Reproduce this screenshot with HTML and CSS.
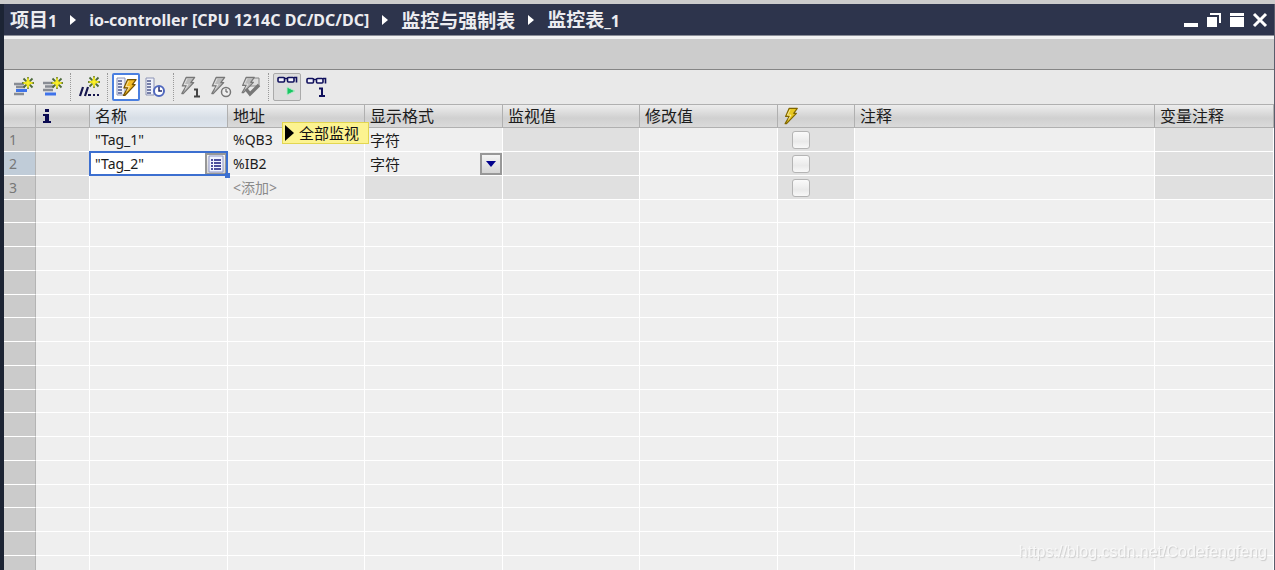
FILE: index.html
```html
<!DOCTYPE html>
<html lang="zh-CN">
<head>
    <meta charset="UTF-8">
    <meta name="viewport" content="width=device-width, initial-scale=1.0">
    <title>监控表_1</title>
    <link rel="stylesheet" href="styles.css">
</head>
<body>
    <!-- shared icon shapes -->
    <svg class="symbols" aria-hidden="true">
        <symbol id="star" viewBox="0 0 12 12">
            <path d="M6 0V12M0 6H12M1.5 1.5L10.5 10.5M10.5 1.5L1.5 10.5" stroke="#4d6a3c" stroke-width="1.8"/>
            <path d="M6 2L7 5L10 6L7 7L6 10L5 7L2 6L5 5Z" fill="#fff23c" stroke="#f4ea20" stroke-width="1.5"/>
        </symbol>
        <symbol id="bolt" viewBox="0 0 16 20">
            <path d="M6 1.5H15L11 7H14L3 18.5H1.5L6 10.5H2Z" stroke-width="1.3" stroke-linejoin="round"/>
            <path d="M7 3L4 9H8L5 14" fill="none" stroke="#fff" stroke-opacity=".6"/>
        </symbol>
        <symbol id="ruler" viewBox="0 0 10 19">
            <path d="M1 1H9V18H1Z" fill="#eef0fa" stroke="#8d94b4"/>
            <path d="M2 4H6M2 7H6M2 10H6M2 13H6M2 16H6" stroke="#4d588c" stroke-width="1.3"/>
        </symbol>
        <symbol id="glasses" viewBox="0 0 22 8">
            <rect x="1" y="1.500" width="6.500" height="4.500" rx="1" fill="#f4f4fc" stroke="#10105c" stroke-width="1.600"/>
            <rect x="10.500" y="1.500" width="6.500" height="4.500" rx="1" fill="#f4f4fc" stroke="#10105c" stroke-width="1.600"/>
            <path d="M7 2.500H11M17 1.500H19.500V6.500" fill="none" stroke="#10105c" stroke-width="1.600"/>
        </symbol>
    </svg>

    <div class="app-strip"></div>
    <div class="window">
        <header class="title-bar">
            <nav class="breadcrumb">
                <a href="#"><span class="cjk">项目</span>1</a>
                <i class="arrow"></i>
                <a href="#">io-controller [CPU 1214C DC/DC/DC]</a>
                <i class="arrow"></i>
                <a href="#" class="cjk">监控与强制表</a>
                <i class="arrow"></i>
                <a href="#"><span class="cjk">监控表</span>_1</a>
            </nav>
            <div class="window-buttons">
                <button aria-label="最小化"><svg width="16" height="16"><path d="M1 11H15V15H1Z" fill="#fff"/></svg></button>
                <button aria-label="还原"><svg width="16" height="16"><path d="M1 5H11V15H1Z" fill="#fff"/><path d="M4 2H14V11" fill="none" stroke="#fff" stroke-width="2"/></svg></button>
                <button aria-label="最大化"><svg width="16" height="16"><path d="M1 1H15V4H1ZM1 5H15V15H1Z" fill="#fff"/></svg></button>
                <button aria-label="关闭"><svg width="16" height="16"><path d="M2 2L14 14M14 2L2 14" stroke="#fff" stroke-width="3"/></svg></button>
            </div>
        </header>
        <div class="info-bar"></div>

        <div class="toolbar">
            <div class="tool-group">
                <button aria-label="插入行">
                    <svg width="24" height="24"><path d="M3 9H13M5 12H14M3 19H13" stroke="#888c94" stroke-width="2.4"/><path d="M5 15.500H16" stroke="#3e73ea" stroke-width="3"/><use href="#star" x="11" y="2" width="12" height="12"/></svg>
                </button>
                <button aria-label="添加行">
                    <svg width="24" height="24"><path d="M3 8H13M5 11.500H14M3 15H13" stroke="#888c94" stroke-width="2.400"/><path d="M5 19H16" stroke="#3e73ea" stroke-width="3"/><use href="#star" x="11" y="2" width="12" height="12"/></svg>
                </button>
            </div>
            <div class="tool-group">
                <button aria-label="插入注释行">
                    <svg width="24" height="24"><path d="M6 12L3 21M11 12L8 21M11 20H14M16 20H18M20 20H22" stroke="#15154d" stroke-width="2.2"/><use href="#star" x="11" y="1" width="12" height="12"/></svg>
                </button>
            </div>
            <div class="tool-group">
                <button class="active" aria-label="显示修改列">
                    <svg width="24" height="24"><use href="#ruler" x="2" y="2" width="10" height="19"/><use href="#bolt" x="8" y="3" width="15" height="19" fill="#f3bc26" stroke="#765300"/></svg>
                </button>
                <button aria-label="显示扩展模式列">
                    <svg width="24" height="24"><use href="#ruler" x="2" y="2" width="10" height="19"/><circle cx="16" cy="16" r="5" fill="#fff" stroke="#5068be" stroke-width="2"/><path d="M16 12V16H19" fill="none" stroke="#242c70" stroke-width="1.500"/></svg>
                </button>
            </div>
            <div class="tool-group">
                <button aria-label="立即一次性修改">
                    <svg width="24" height="24"><use href="#bolt" x="0" y="1" width="16" height="19" fill="#bbb" stroke="#777"/><path d="M14 14.500H17V21M14 21.500H20" fill="none" stroke="#444" stroke-width="2"/></svg>
                </button>
                <button aria-label="使用触发器修改">
                    <svg width="24" height="24"><use href="#bolt" x="1" y="1" width="16" height="19" fill="#bbb" stroke="#777"/><circle cx="17" cy="17" r="4.500" fill="#eee" stroke="#777" stroke-width="1.500"/><path d="M17 14V17H19" fill="none" stroke="#555"/></svg>
                </button>
                <button aria-label="启用外围设备输出">
                    <svg width="24" height="24"><path d="M12 3H21V11H12Z" fill="#ddd" stroke="#888"/><use href="#bolt" x="2" y="1" width="16" height="18" fill="#bbb" stroke="#777"/><path d="M8 14L12 19L21 10" fill="none" stroke="#777" stroke-width="3.500"/></svg>
                </button>
            </div>
            <div class="tool-group">
                <button class="pressed" aria-label="全部监视">
                    <svg width="24" height="24"><use href="#glasses" x="2" y="1" width="22" height="8"/><path d="M12 12L20 16L12 20Z" fill="#19c763" stroke="#b7e8ca"/></svg>
                </button>
                <button aria-label="立即一次性监视">
                    <svg width="24" height="24"><use href="#glasses" x="2" y="2" width="22" height="8"/><path d="M15 13.500H18V21M15 21H21" fill="none" stroke="#10105c" stroke-width="2"/></svg>
                </button>
            </div>
        </div>

        <main class="table-area">
            <table class="watch-table">
                <colgroup>
                    <col class="col-number"><col class="col-info"><col class="col-name"><col class="col-address"><col class="col-format">
                    <col class="col-monitor"><col class="col-value"><col class="col-modify"><col><col class="col-tag">
                </colgroup>
                <thead>
                    <tr>
                        <th></th>
                        <th><svg class="icon-info" width="10" height="16"><path d="M3 1H7V4H3ZM1 6H7V13H9V15H1V13H3V8H1Z" fill="#0b0b52"/></svg></th>
                        <th class="current">名称</th>
                        <th>地址</th>
                        <th>显示格式</th>
                        <th>监视值</th>
                        <th>修改值</th>
                        <th><svg class="icon-bolt" width="16" height="18"><use href="#bolt" width="16" height="18" fill="#e8c820" stroke="#806600"/></svg></th>
                        <th>注释</th>
                        <th>变量注释</th>
                    </tr>
                </thead>
                <tbody id="rows">
                    <tr>
                        <td>1</td><td class="locked"></td><td>"Tag_1"</td><td>%QB3</td><td>字符</td><td class="locked"></td><td></td>
                        <td class="locked"><input type="checkbox" aria-label="修改 1"></td><td></td><td class="locked"></td>
                    </tr>
                    <tr class="selected">
                        <td>2</td><td class="locked"></td>
                        <td class="editing">
                            <div class="cell-editor">
                                <input type="text" value="&quot;Tag_2&quot;" aria-label="名称">
                                <button class="cell-button" aria-label="选择变量"><svg width="18" height="18"><path d="M2 1H16V17H2Z" fill="#f2f4ff" stroke="#8e96c8"/><path d="M4 5H6M7 5H14M4 8H6M7 8H14M4 11H6M7 11H14M4 14H6M7 14H14" stroke="#17177c" stroke-width="1.500"/></svg></button>
                            </div>
                        </td>
                        <td>%IB2</td>
                        <td class="format">
                            <div class="cell-editor">
                                <select aria-label="显示格式"><option>字符</option></select>
                                <span class="cell-button"><svg width="12" height="8"><path d="M1 1H11L6 7Z" fill="#00008c"/></svg></span>
                            </div>
                        </td>
                        <td class="locked"></td><td></td>
                        <td class="locked"><input type="checkbox" aria-label="修改 2"></td><td></td><td class="locked"></td>
                    </tr>
                    <tr>
                        <td>3</td><td class="locked"></td><td></td><td class="hint">&lt;添加&gt;</td><td class="locked"></td><td class="locked"></td><td></td>
                        <td class="locked"><input type="checkbox" aria-label="修改 3"></td><td></td><td class="locked"></td>
                    </tr>
                </tbody>
            </table>
            <div class="tooltip"><i class="tooltip-arrow"></i>全部监视</div>
        </main>
    </div>
    <div class="watermark">https://blog.csdn.net/Codefengfeng</div>

    <script>
        // fill the rest of the sheet with empty rows
        const rows = document.getElementById('rows');
        for (let i = 0; i < 40; i++) {
            rows.insertAdjacentHTML('beforeend', '<tr>' + '<td></td>'.repeat(10) + '</tr>');
        }
    </script>
</body>
</html>
```
FILE: styles.css
```css
:root {
    --navy: #2d344c;
    --cell: #efefef;
    --locked: #e0e0e0;
    --number: #cbcbcb;
    --grid: #fff;
    --blue: #3c6fd0;
}

* {
    box-sizing: border-box;
}

body {
    margin: 0;
    height: 100vh;
    display: flex;
    flex-direction: column;
    overflow: hidden;
    background: #ccc;
    color: #1c1c1c;
    font-family: "Noto Sans", "Noto Sans CJK SC", sans-serif;
    font-size: 14px;
}

button {
    padding: 0;
    border: 0;
    background: none;
}

svg {
    display: block;
}

.symbols {
    position: absolute;
    width: 0;
    height: 0;
}

.app-strip {
    flex: none;
    height: 4px;
    background: #ccc;
}

.window {
    flex: 1;
    min-height: 0;
    display: flex;
    flex-direction: column;
    border-left: 4px solid #1c2434;
    border-right: 1px solid #5a5d6c;
}

.title-bar {
    flex: none;
    height: 32px;
    display: flex;
    justify-content: space-between;
    align-items: center;
    padding: 0 6px;
    background: var(--navy);
    border-bottom: 1px solid #8b8e98;
}

.breadcrumb {
    display: flex;
    align-items: center;
    gap: 13px;
    font-size: 16px;
    font-weight: 700;
    line-height: 24px;
    white-space: nowrap;
}

.breadcrumb a {
    color: #ececf0;
    text-decoration: none;
}

.cjk {
    font-family: "Noto Sans CJK SC", sans-serif;
    font-size: 19px;
}

.arrow {
    border-left: 6px solid #fff;
    border-top: 5px solid transparent;
    border-bottom: 5px solid transparent;
}

.window-buttons {
    display: flex;
    gap: 7px;
}

.info-bar {
    flex: none;
    height: 34px;
    background: #ccc;
    border-top: 3px solid #f2f2f2;
    border-bottom: 1px solid #858585;
}

.toolbar {
    flex: none;
    height: 34px;
    display: flex;
    align-items: center;
    padding: 0 1px;
    background: #e9e9e9;
}

.tool-group {
    display: flex;
    gap: 1px;
    padding: 0 4px;
}

.tool-group + .tool-group {
    border-left: 1px dotted #999;
}

.tool-group button {
    width: 28px;
    height: 28px;
    display: flex;
    align-items: center;
    justify-content: center;
    border: 1px solid transparent;
    border-radius: 2px;
}

.tool-group .active {
    background: #fff;
    border: 2px solid #4a7fe0;
}

.tool-group .pressed {
    background: #ddd;
    border-color: #aaa;
}

.table-area {
    flex: 1;
    min-height: 0;
    position: relative;
    overflow: hidden;
    background: var(--cell);
}

.watch-table {
    width: 100%;
    table-layout: fixed;
    border-collapse: separate;
    border-spacing: 0;
}

.col-number { width: 32px; }
.col-info { width: 54px; }
.col-name,
.col-format,
.col-value { width: 138px; }
.col-address,
.col-monitor { width: 137px; }
.col-modify { width: 77px; }
.col-tag { width: 119px; }

th {
    height: 24px;
    padding: 0 5px;
    background: linear-gradient(#ededed, #d0d0d0 60%, #dadada);
    border: solid #b0b0b0;
    border-width: 1px 1px 1px 0;
    font-size: 16px;
    font-weight: 400;
    line-height: 22px;
    text-align: left;
}

th.current {
    background: linear-gradient(#eef2f6, #d7dee6 60%, #dee5ee);
}

td {
    height: 24px;
    padding: 0 5px;
    background: var(--cell);
    border: solid var(--grid);
    border-width: 0 1px 1px 0;
    line-height: 22px;
    white-space: nowrap;
}

tbody tr:nth-child(4n) td {
    height: 23px;
}

td:first-child {
    background: var(--number);
    border-right-color: #b4b4b4;
    color: #777;
}

.selected td:first-child {
    background: #c0ccd8;
}

td.locked {
    background: var(--locked);
}

td.hint {
    color: #8a8a8a;
}

td:nth-child(5),
select {
    font-size: 15px;
}

td.editing,
td.format {
    padding: 0;
}

.cell-editor {
    position: relative;
    display: flex;
    align-items: center;
    height: 23px;
}

.editing .cell-editor {
    background: #fff;
    outline: 2px solid var(--blue);
    outline-offset: -1px;
}

/* fill handle of the selected cell */
.editing .cell-editor::after {
    content: '';
    position: absolute;
    right: -3px;
    bottom: -3px;
    width: 5px;
    height: 5px;
    background: var(--blue);
}

.cell-editor input,
.cell-editor select {
    flex: 1;
    min-width: 0;
    margin: 0;
    padding: 0 5px;
    border: 0;
    outline: 0;
    appearance: none;
    background: none;
    color: inherit;
    font-family: inherit;
    line-height: 20px;
}

.cell-editor input {
    font-size: 14px;
}

.cell-button {
    flex: none;
    width: 22px;
    height: 22px;
    display: flex;
    align-items: center;
    justify-content: center;
    background: linear-gradient(#f4f4f4, #d4d4d4);
    border: 2px solid #989898;
}

input[type="checkbox"] {
    display: block;
    width: 18px;
    height: 18px;
    margin: 0 0 0 9px;
    appearance: none;
    background: linear-gradient(#fafafa, #eaeaea 60%, #f8f8f8);
    border: 1px solid #b4b4b4;
    border-radius: 3px;
}

.icon-info {
    margin-left: 1px;
}

.tooltip {
    position: absolute;
    top: 18px;
    left: 278px;
    display: flex;
    align-items: center;
    gap: 5px;
    height: 22px;
    padding: 0 9px 0 2px;
    background: #fcf390;
    border: 1px solid #e2d650;
    font-family: "Noto Sans CJK SC", sans-serif;
    font-size: 15px;
    line-height: 20px;
    color: #111;
}

.tooltip-arrow {
    border-left: 9px solid #000;
    border-top: 8px solid transparent;
    border-bottom: 8px solid transparent;
}

.watermark {
    position: fixed;
    right: 8px;
    bottom: 8px;
    color: #f8f8f8;
    text-shadow: 1px 1px 1px #ccc;
    font-family: "Liberation Sans", Arial, sans-serif;
    font-size: 16px;
    line-height: 20px;
    pointer-events: none;
}
```
